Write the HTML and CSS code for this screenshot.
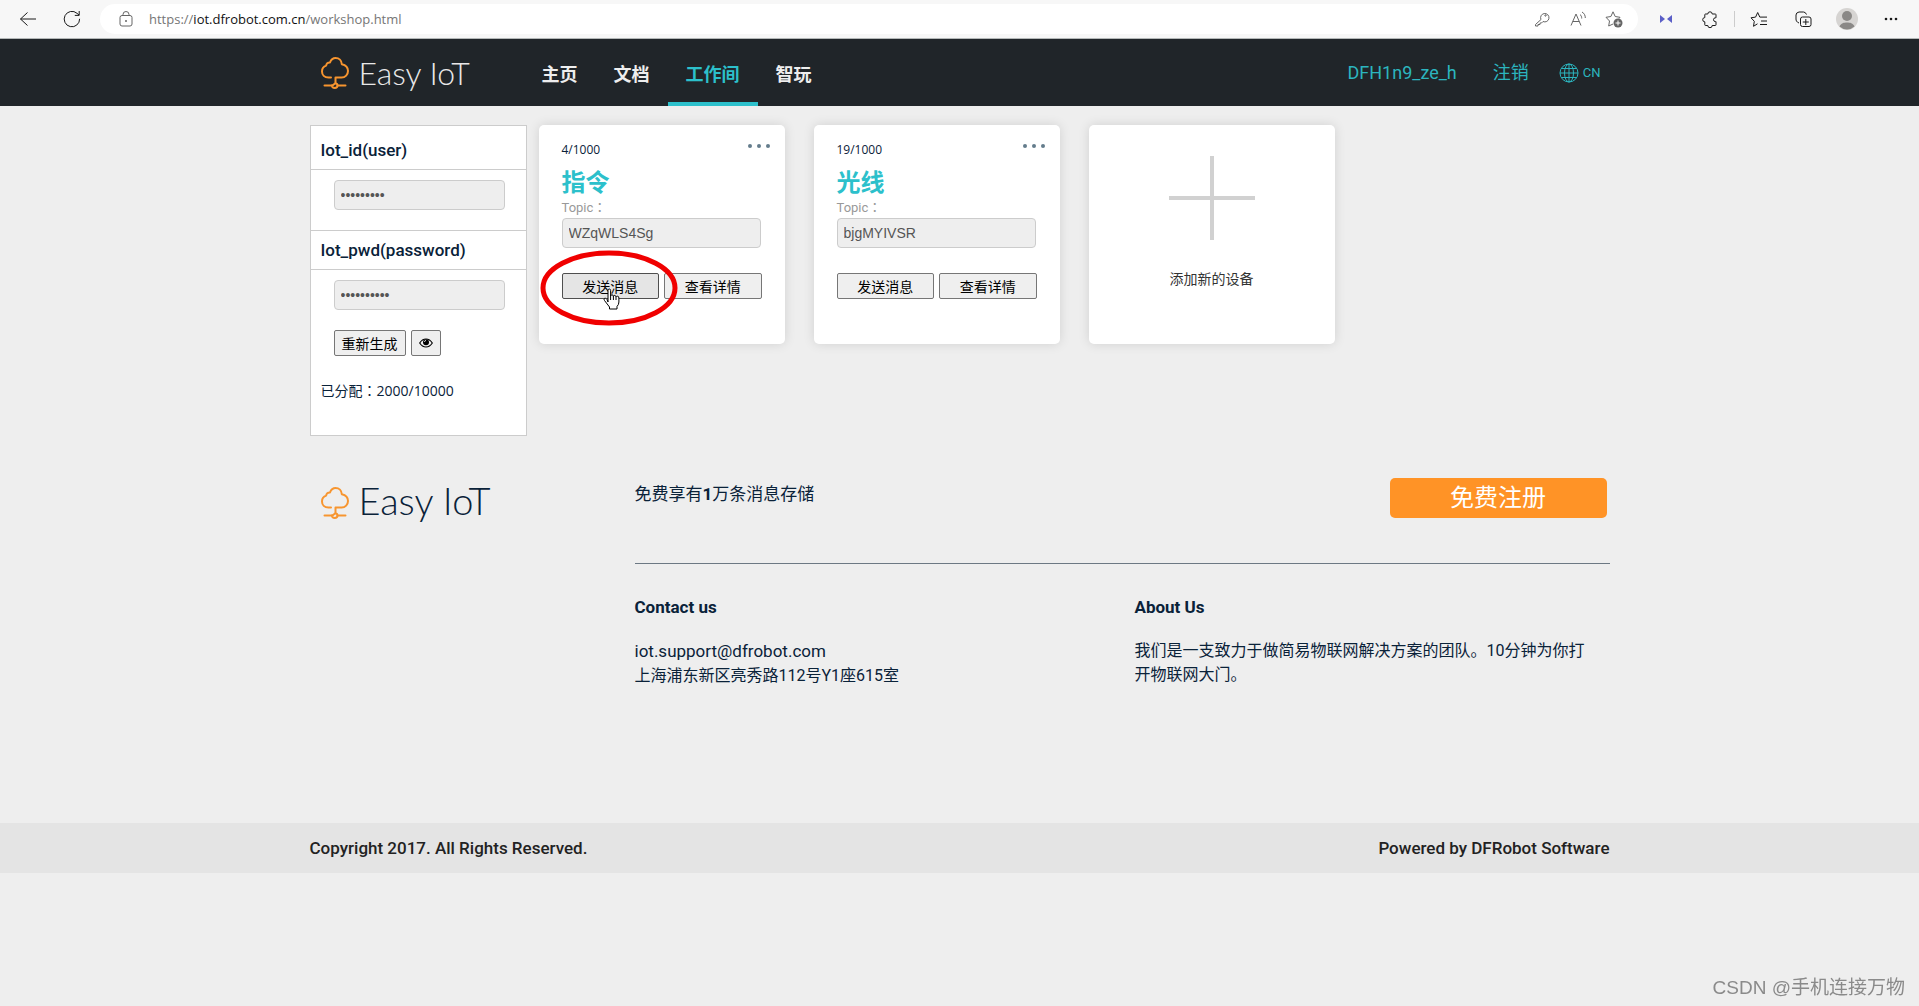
FILE: index.html
```html
<!DOCTYPE html>
<html lang="zh-CN">
<head>
<meta charset="utf-8">
<title>Easy IoT</title>
<link rel="stylesheet" href="styles.css">
</head>
<body>
<svg class="defs" aria-hidden="true">
  <symbol id="cloud" viewBox="0 0 28 32">
    <g fill="none" stroke="#f7952f" stroke-width="2" stroke-linecap="round" stroke-linejoin="round">
      <path d="M10 20.500H7.500C3.500 20.500 1 17.700 1 14.400c0-3 1.600-5 4.200-5.800 0-2 1.600-3.400 3.800-3.200C10 2.800 12 1 14.600 1c3.400 0 6 2.500 6.200 6.200C24.600 8 27 10.800 27 14c0 3.600-2.800 6.500-6.400 6.500H14.500V26"/>
      <path d="M3.500 28.500H11M16.500 28.500H24.500"/>
      <path d="M11 28.500c0 1.300 1.200 2.400 2.800 2.400s2.700-1.100 2.700-2.400c0-1.300-.8-2-2-2-1.600 0-1.500 1.500-3.500 2Z"/>
    </g>
  </symbol>
</svg>

<div class="browser">
  <button class="tool" aria-label="Back"><svg width="18" height="16" viewBox="0 0 18 16"><path d="M8.500 1.500L1.500 8l7 6.500M1.500 8H17"/></svg></button>
  <button class="tool" aria-label="Refresh"><svg width="18" height="18" viewBox="0 0 18 18"><path d="M16.600 8.800A7.700 7.700 0 1 1 14 3.300L16 5M16.200 1v4.400h-4.400"/></svg></button>
  <div class="address">
    <svg class="lock" width="14" height="16" viewBox="0 0 14 16"><rect x="1" y="4.500" width="12" height="10.500" rx="2"/><path d="M4 4.500V3.500a3 3 0 0 1 6 0v1"/><circle class="solid" cx="7" cy="10" r="1"/></svg>
    <div class="url" role="textbox" aria-label="Address" contenteditable="true" spellcheck="false">https://<b>iot.dfrobot.com.cn</b>/workshop.html</div>
    <div class="address-tools">
      <button class="tool" aria-label="Passwords"><svg width="16" height="16" viewBox="0 0 16 16"><path d="M7 8.500L1.500 13.500v1.500h2.500v-1.500h2v-1.500h1.500l1.500-1.500a4.200 4.200 0 1 0-2-2Z"/><circle cx="11.500" cy="4.500" r=".7"/></svg></button>
      <button class="tool" aria-label="Read aloud"><svg width="17" height="16" viewBox="0 0 17 16"><path d="M1 14.500L6 3l5 11.500M2.800 10.500h6.500M10 3.500c1.300 1 1.700 2.300 1.700 4M12 1c2.500 1.500 3.300 3.500 3.300 6"/></svg></button>
      <button class="tool" aria-label="Add to favorites"><svg width="18" height="18" viewBox="0 0 18 18"><path d="M8 14l-4.300 2 .8-5L1 7.300l4.900-.8L8 1.800l2.200 4.700 4.800.8-1 1.200"/><circle class="solid" cx="13" cy="13" r="4.500"/><path class="knock" d="M13 10.500v5M10.500 13h5"/></svg></button>
    </div>
  </div>
  <button class="tool" aria-label="Extension"><svg width="14" height="12" viewBox="0 0 14 12"><path class="bowtie" d="M1 2l5 4-5 4zM13 2L8 6l5 4z"/></svg></button>
  <button class="tool" aria-label="Extensions"><svg width="16" height="17" viewBox="0 0 16 17"><path d="M3.500 3h2.300a2.200 2.200 0 0 1 4.400 0h3.100q.7 0 .7.700v3.100h-.6a1.900 1.900 0 0 0 0 3.800h.6v3.200q0 .7-.7.700h-3.100a2 2 0 0 1-4.400 0H3.500q-.7 0-.7-.7v-3a2.100 2.100 0 0 1 0-4.200V3.700Q2.800 3 3.500 3Z"/></svg></button>
  <i class="divider"></i>
  <button class="tool" aria-label="Favorites"><svg width="18" height="17" viewBox="0 0 18 17"><path d="M7.500 12.800l-4 2.500.8-5L1 6.800l4.600-.7L7.700 1.500l2.100 4.600H17M11 10h6M10 13.500h7"/></svg></button>
  <button class="tool" aria-label="Collections"><svg width="17" height="17" viewBox="0 0 17 17"><path d="M4 12C1.500 11 1 9.500 1 8V4q0-2.500 3-3h4.500q2 0 3 2.500M5.500 8q0-2 2-2H14q2 0 2 2v5.500q0 2-2 2H7.500q-2 0-2-2ZM10.800 8v6M7.800 11h6"/></svg></button>
  <button class="tool" aria-label="Profile"><svg width="22" height="22" viewBox="0 0 22 22"><circle cx="11" cy="11" r="11" fill="#d6d4d2" stroke="none"/><g fill="#8a8886" stroke="none"><circle cx="11" cy="8" r="5"/><path d="M3.500 18.500C5 15 8 14.500 11 14.500s6 .5 7.500 4A11 11 0 0 1 3.500 18.500Z"/></g></svg></button>
  <button class="tool" aria-label="Settings and more"><svg width="14" height="4" viewBox="0 0 14 4"><g class="solid"><circle cx="2" cy="2" r="1.300"/><circle cx="7" cy="2" r="1.300"/><circle cx="12" cy="2" r="1.300"/></g></svg></button>
</div>

<header class="topbar">
  <div class="container topbar-row">
    <a class="brand" href="#"><svg width="28" height="32"><use href="#cloud"/></svg>Easy IoT</a>
    <nav class="nav">
      <a href="#">主页</a><a href="#">文档</a><a class="active" href="#">工作间</a><a href="#">智玩</a>
    </nav>
    <div class="account">
      <a href="#">DFH1n9_ze_h</a>
      <a href="#">注销</a>
      <a class="lang" href="#"><svg width="20" height="20" viewBox="0 0 20 20" fill="none" stroke="currentColor"><circle cx="10" cy="10" r="9"/><ellipse cx="10" cy="10" rx="4.500" ry="9"/><path d="M1 10h18M10 1v18M2.500 5.500h15M2.500 14.500h15"/></svg>CN</a>
    </div>
  </div>
</header>

<main class="container workspace">
  <aside class="keys">
    <h2><label for="iot-id">Iot_id(user)</label></h2>
    <div class="key-body"><input class="field" id="iot-id" type="password" value="123456789" readonly></div>
    <h2><label for="iot-pwd">Iot_pwd(password)</label></h2>
    <div class="key-body last">
      <input class="field" id="iot-pwd" type="password" value="1234567890" readonly>
      <div class="key-actions">
        <button class="btn">重新生成</button>
        <button class="btn" aria-label="显示"><svg width="14" height="10" viewBox="0 0 14 10"><path d="M.7 5Q3.200 1 7 1t6.300 4Q10.800 9 7 9T.7 5Z" fill="none" stroke="#000" stroke-width="1.200"/><circle cx="7" cy="4.300" r="3"/><path d="M5.500 4A1.600 1.600 0 0 1 7 2.400" stroke="#fff" fill="none" stroke-width=".8"/></svg></button>
      </div>
    </div>
    <p class="quota">已分配<span lang="zh-TW">：</span>2000/10000</p>
  </aside>

  <section class="cards">
    <article class="card">
      <div class="card-top"><span>4/1000</span><button class="more" aria-label="更多"><i></i><i></i><i></i></button></div>
      <h3>指令</h3>
      <label class="topic" for="topic-1" lang="zh-TW">Topic：</label>
      <input class="field" id="topic-1" type="text" value="WZqWLS4Sg" readonly>
      <div class="card-actions">
        <button class="btn hover">发送消息</button>
        <button class="btn">查看详情</button>
        <svg class="ring" width="138" height="76" viewBox="0 0 138 76"><ellipse cx="69" cy="38" rx="66" ry="35" fill="none" stroke="#f00000" stroke-width="5"/></svg>
        <svg class="pointer" width="18" height="23" viewBox="0 0 18 23"><path d="M5 14V2.500q0-1.500 1.300-1.500T7.600 2.500V8q.2-1.200 1.400-1.200t1.400 1.400q.3-.8 1.300-.8t1.300 1.500q.4-.7 1.300-.7 1.600 0 1.600 1.800V14q0 2.500-1.900 4.500V21H6.500v-2L1.500 12.500Q.5 11 1.600 10.300T4 11.500Z" fill="#fff" stroke="#000"/><path d="M7.600 8v4M10.400 8v4M13 9v3" stroke="#000"/></svg>
      </div>
    </article>
    <article class="card">
      <div class="card-top"><span>19/1000</span><button class="more" aria-label="更多"><i></i><i></i><i></i></button></div>
      <h3>光线</h3>
      <label class="topic" for="topic-2" lang="zh-TW">Topic：</label>
      <input class="field" id="topic-2" type="text" value="bjgMYIVSR" readonly>
      <div class="card-actions">
        <button class="btn">发送消息</button>
        <button class="btn">查看详情</button>
      </div>
    </article>
    <button class="card add">
      <svg width="86" height="84" viewBox="0 0 86 84"><path d="M43 0v84M0 42h86" stroke="#d1d1d1" stroke-width="4"/></svg>
      <span>添加新的设备</span>
    </button>
  </section>
</main>

<footer>
  <div class="container foot">
    <a class="brand dark" href="#"><svg width="28" height="32"><use href="#cloud"/></svg>Easy IoT</a>
    <div class="foot-main">
      <div class="promo"><p>免费享有<b>1</b>万条消息存储</p><button class="signup">免费注册</button></div>
      <div class="foot-cols">
        <section><h4>Contact us</h4><p><a class="mail" href="#">iot.support@dfrobot.com</a><br>上海浦东新区亮秀路112号Y1座615室</p></section>
        <section><h4>About Us</h4><p>我们是一支致力于做简易物联网解决方案的团队。10分钟为你打开物联网大门。</p></section>
      </div>
    </div>
  </div>
  <div class="legal"><div class="container legal-row"><span>Copyright 2017. All Rights Reserved.</span><span>Powered by DFRobot Software</span></div></div>
</footer>
<div class="watermark">CSDN @手机连接万物</div>
</body>
</html>
```
FILE: styles.css
```css
* { box-sizing: border-box; }
body {
  margin: 0;
  min-height: 100vh;
  background: #eee;
  color: #0a2239;
  font: 16px/24px Roboto, "Noto Sans CJK SC", sans-serif;
}
h2, h3, h4, p { margin: 0; }
a { color: inherit; text-decoration: none; }
button, input { font: inherit; color: inherit; margin: 0; }
svg { display: block; flex: none; }
.defs { position: absolute; width: 0; height: 0; }
.container { max-width: 1300px; margin: 0 auto; }

/* Browser toolbar */
.browser {
  display: flex;
  align-items: center;
  height: 39px;
  padding-right: 6px;
  background: #f7f7f7;
  border-bottom: 1px solid #b4b8b8;
  color: #1a1a1a;
}
.tool {
  display: flex;
  align-items: center;
  justify-content: center;
  width: 44px;
  height: 30px;
  padding: 0;
  border: 0;
  background: none;
}
.browser > .tool:first-child { margin-left: 6px; }
.browser svg { fill: none; stroke: currentColor; stroke-width: 1; }
.browser .solid { fill: currentColor; stroke: none; }
.browser .knock { stroke: #fff; }
.browser .bowtie { fill: #5b5fc7; stroke: none; }
.address {
  display: flex;
  flex: 1;
  align-items: center;
  height: 30px;
  margin: 0 6px;
  padding: 0 6px 0 19px;
  border-radius: 15px;
  background: #fff;
  color: #666;
}
.url {
  flex: 1;
  margin-left: 16px;
  font: 13px/20px "Open Sans", sans-serif;
  color: #767676;
  outline: 0;
}
.url b { font-weight: 400; color: #111; }
.address-tools { display: flex; }
.address-tools .tool { width: 36px; }
.divider { width: 1px; height: 16px; margin: 0 2px; background: #ccc; }

/* Site header */
.topbar { background: #202529; }
.topbar-row { display: flex; height: 67px; }
.brand {
  display: flex;
  align-items: center;
  gap: 10px;
  width: 214px;
  padding-left: 11px;
  font: 300 32px/40px Lato, sans-serif;
  color: #e8e8e8;
}
.nav { display: flex; flex: 1; }
.nav a {
  padding: 18px 18px 0;
  border-bottom: 4px solid transparent;
  font: bold 18px/32px "Noto Sans CJK SC", sans-serif;
  color: #eee;
}
.nav a.active { color: #2cc0cb; border-color: #2cc0cb; }
.account {
  display: flex;
  align-items: center;
  gap: 36px;
  padding-right: 9px;
  font-size: 18px;
  color: #2cb5bf;
}
.account .lang { display: flex; align-items: center; gap: 4px; margin-left: -6px; font-size: 13px; }

/* Workspace */
.workspace { display: flex; align-items: flex-start; gap: 12px; padding-top: 19px; }
.keys { width: 217px; border: 1px solid #ccc; background: #fff; padding-bottom: 30px; }
.keys h2 {
  padding: 7px 10px;
  border-bottom: 1px solid #ccc;
  font-size: 17px;
  font-weight: 500;
  line-height: 24px;
}
.keys h2:first-child { padding-top: 12px; }
.key-body { padding: 10px 21px 20px 23px; border-bottom: 1px solid #ccc; }
.key-body.last { border: 0; }
.key-actions { display: flex; gap: 5px; margin-top: 20px; }
.field {
  display: block;
  width: 100%;
  height: 30px;
  padding: 0 6px;
  border: 1px solid #ccc;
  border-radius: 4px;
  background: #eee;
  color: #555;
  font: 14px "Liberation Sans", sans-serif;
}
.btn {
  height: 26px;
  padding: 0 7px;
  border: 1px solid #767676;
  border-radius: 2px;
  background: #efefef;
  color: #000;
  font: 14px/20px "Noto Sans CJK SC", sans-serif;
}
.btn.hover { background: #e5e5e5; border-color: #4f4f4f; }
.quota { padding: 2px 10px; font: 14px/24px "Open Sans", "Noto Sans CJK SC", sans-serif; }
.quota span { font-family: "Noto Sans CJK TC", sans-serif; }

.cards { display: flex; flex-wrap: wrap; gap: 29px; }
.card {
  width: 246px;
  min-height: 219px;
  padding: 13px 23px 12px;
  border: 0;
  border-radius: 5px;
  background: #fff;
  box-shadow: 0 0 12px rgba(0, 0, 0, .12);
}
.card-top { display: flex; justify-content: space-between; font: 12px/24px "Open Sans", sans-serif; }
.more { display: flex; gap: 5px; height: 16px; align-items: center; padding: 0; border: 0; background: none; margin-right: -8px; }
.more i { width: 4px; height: 4px; border-radius: 50%; background: #647c8c; }
.card h3 { font: bold 24px/38px "Noto Sans CJK SC", sans-serif; color: #2cc0cb; }
.topic { display: block; margin-bottom: 2px; font: 13px/16px Roboto, "Noto Sans CJK TC", sans-serif; color: #999; }
.card .field { width: 199px; }
.card-actions { position: relative; display: flex; gap: 5px; width: 200px; margin-top: 25px; }
.card-actions .btn { flex: 1; }
.ring { position: absolute; left: -22px; top: -23px; pointer-events: none; }
.pointer { position: absolute; left: 41px; top: 15px; pointer-events: none; }
.add { display: flex; flex-direction: column; align-items: center; gap: 27px; padding-top: 31px; font-size: 14px; line-height: 24px; color: #333; }

/* Footer */
.foot { display: flex; align-items: flex-start; padding-top: 42px; }
.brand.dark { width: 325px; padding-top: 2px; font-size: 38px; color: #0a2239; }
.brand.dark svg { margin-top: 6px; }
.foot-main { flex: 1; padding-bottom: 135px; }
.promo { display: flex; justify-content: space-between; padding-bottom: 45px; border-bottom: 1px solid #6c7883; font-size: 17px; line-height: 32px; }
.signup {
  width: 217px;
  height: 40px;
  margin-right: 3px;
  padding: 0;
  border: 0;
  border-radius: 5px;
  background: #ff9326;
  color: #fff;
  font-size: 24px;
  line-height: 40px;
}
.foot-cols { display: flex; padding-top: 31px; }
.foot-cols section { width: 500px; }
.foot-cols section + section { width: 455px; }
.foot-cols h4 { font-size: 17px; margin-bottom: 20px; }
.mail { font-size: 17px; }
.legal { background: #e4e4e4; }
.legal-row { display: flex; justify-content: space-between; align-items: center; height: 50px; font-size: 17px; font-weight: 500; color: #222; }
.watermark {
  position: fixed;
  right: 14px;
  bottom: 4px;
  font: 19px/28px "Liberation Sans", "Noto Sans CJK SC", sans-serif;
  color: #8a8a8a;
}
```
